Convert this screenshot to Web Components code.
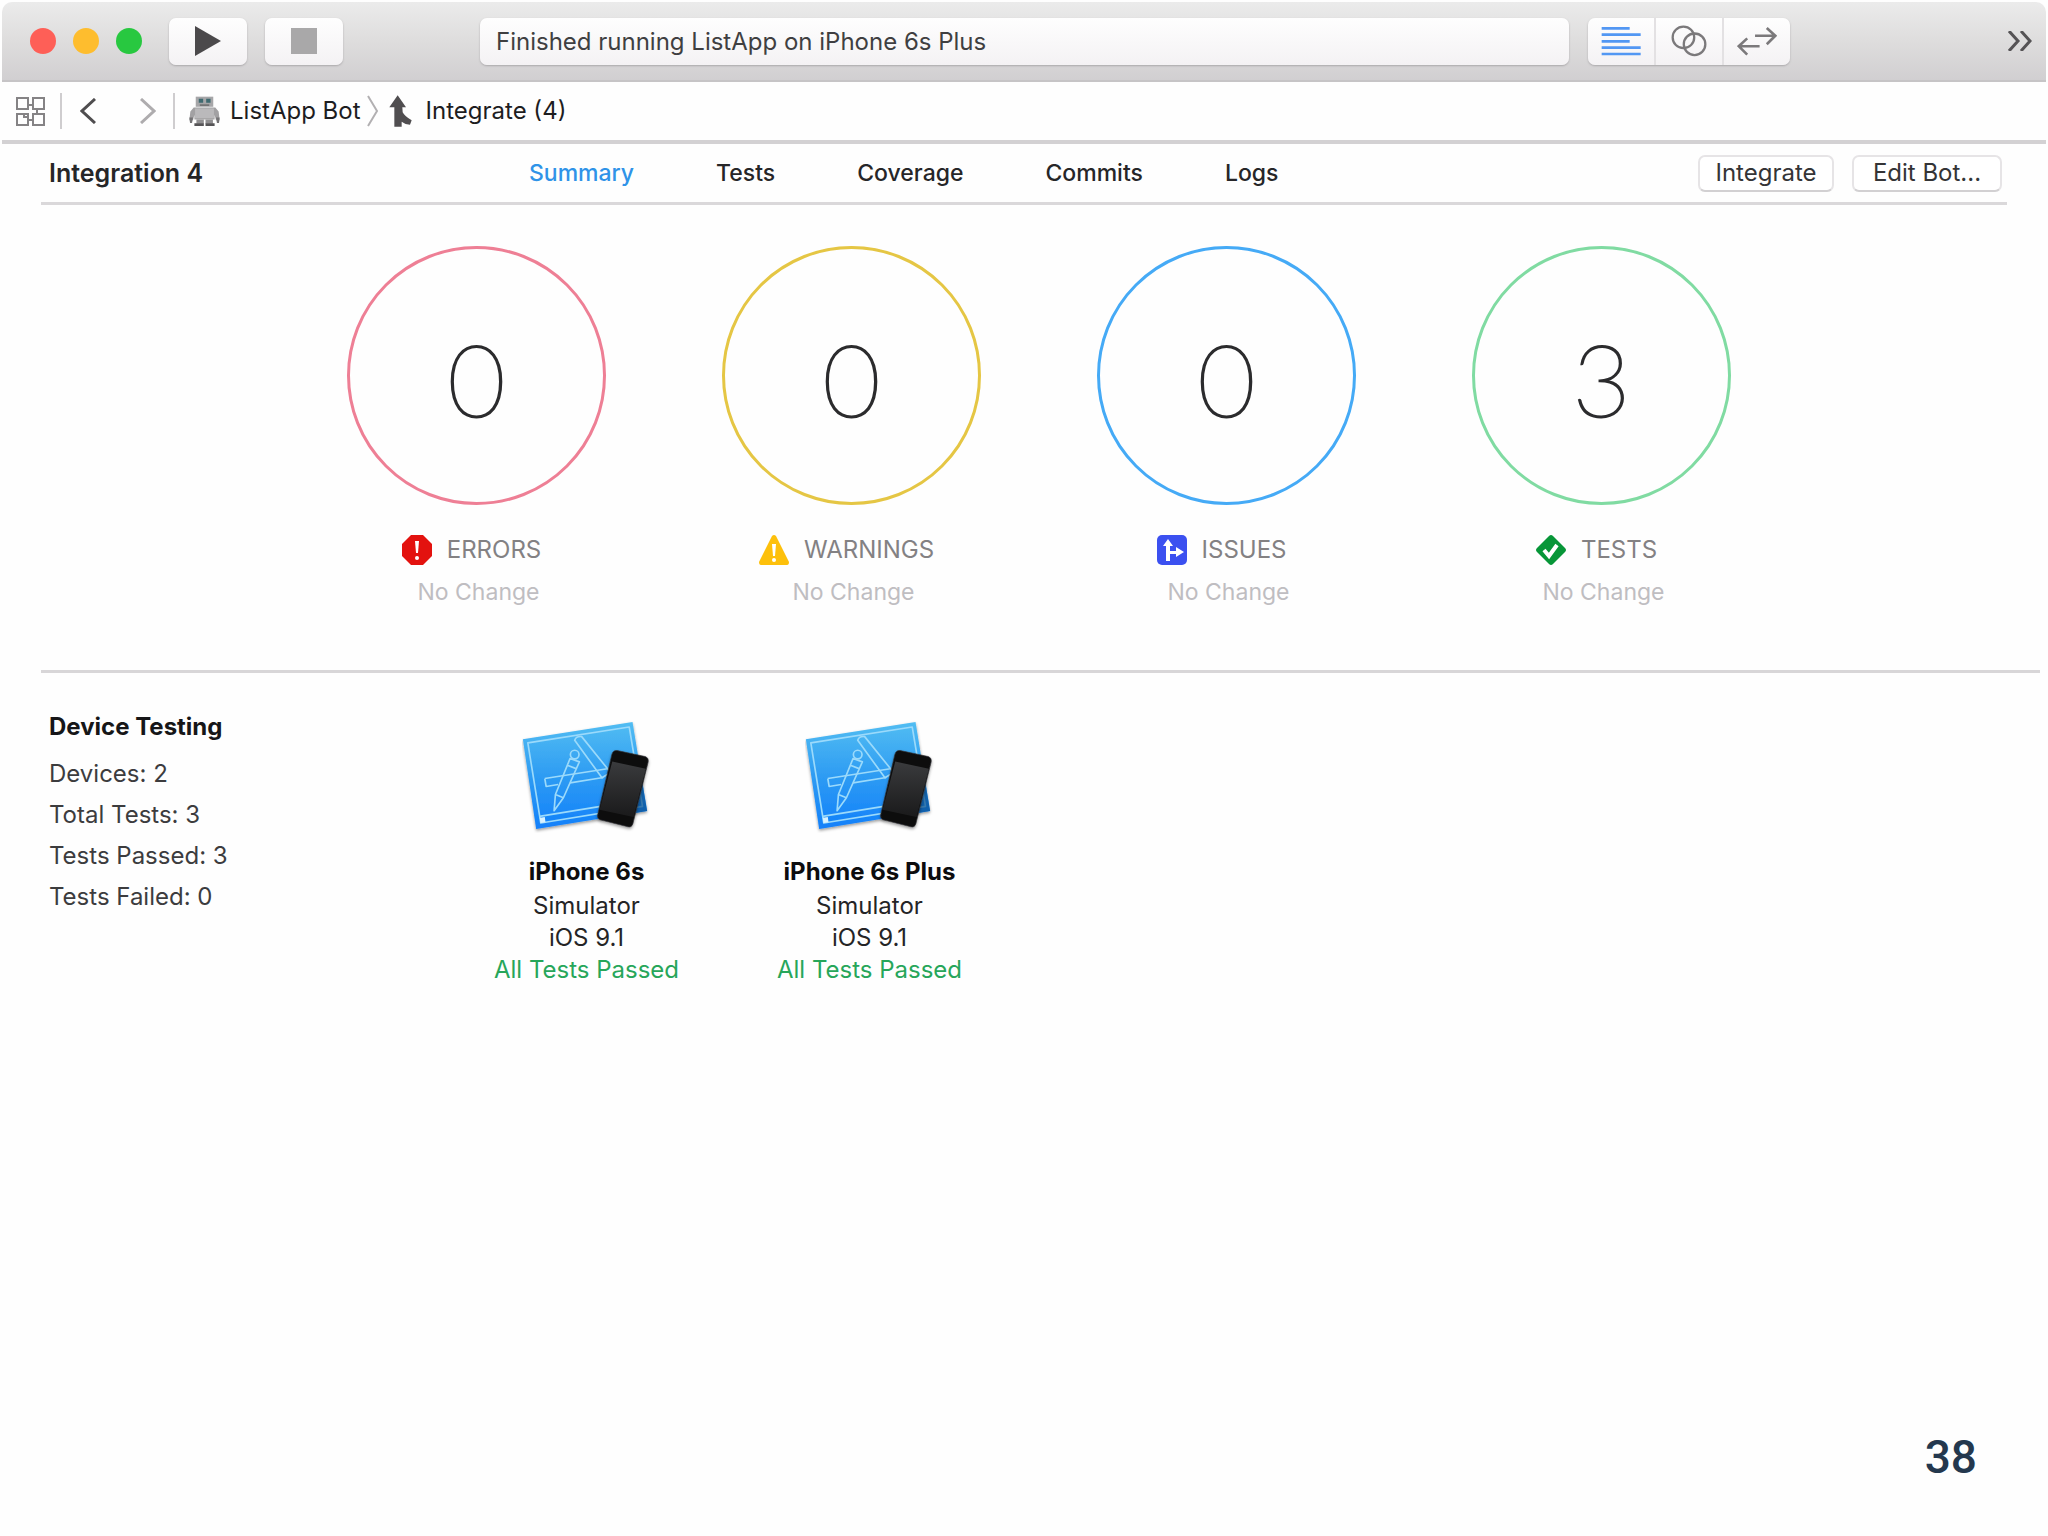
<!DOCTYPE html>
<html lang="en">
<head>
<meta charset="utf-8">
<title>ListApp Bot</title>
<style>
  body { margin: 0; background: #fefefe; font-family: Inter, "Liberation Sans", sans-serif; font-size: 24px; line-height: 32px; color: #262628; }
</style>
</head>
<body>
<bot-window>
  <window-toolbar slot="top" status="Finished running ListApp on iPhone 6s Plus"></window-toolbar>
  <jump-bar slot="top" bot="ListApp Bot" item="Integrate (4)"></jump-bar>
  <report-header slot="top" heading="Integration 4"></report-header>
  <stat-row>
    <stat-ring kind="errors" count="0" note="No Change">ERRORS</stat-ring>
    <stat-ring kind="warnings" count="0" note="No Change">WARNINGS</stat-ring>
    <stat-ring kind="issues" count="0" note="No Change">ISSUES</stat-ring>
    <stat-ring kind="tests" count="3" note="No Change">TESTS</stat-ring>
  </stat-row>
  <device-section>
    <span slot="heading">Device Testing</span>
    <span slot="facts">Devices: 2</span>
    <span slot="facts">Total Tests: 3</span>
    <span slot="facts">Tests Passed: 3</span>
    <span slot="facts">Tests Failed: 0</span>
    <device-card name="iPhone 6s" kind="Simulator" os="iOS 9.1">All Tests Passed</device-card>
    <device-card name="iPhone 6s Plus" kind="Simulator" os="iOS 9.1">All Tests Passed</device-card>
  </device-section>
  <span slot="page">38</span>
</bot-window>
<script>
const base = `:host,*{box-sizing:border-box}button{font:inherit;color:inherit;border:0;padding:0;background:none;display:flex;align-items:center;justify-content:center}a{color:inherit;text-decoration:none}svg{display:block;flex:none}`;

class Base extends HTMLElement {
  connectedCallback() {
    if (this.shadowRoot) return;
    this.attachShadow({ mode: 'open' }).innerHTML = `<style>${base}${this.css()}</style>${this.html()}`;
  }
  at(n) { return this.getAttribute(n) || ''; }
}

customElements.define('bot-window', class extends Base {
  css() { return `
    :host{display:flex;flex-direction:column;min-height:100vh;padding:2px 2px 0}
    footer{margin-top:auto;padding:0 69px 54px;text-align:right;font:500 46px/50px Roboto,"Liberation Sans",sans-serif;color:#24384e}`; }
  html() { return `<slot name="top"></slot><main><slot></slot></main><footer><slot name="page"></slot></footer>`; }
});

customElements.define('window-toolbar', class extends Base {
  css() { return `
    :host{display:flex;align-items:center;height:80px;padding:0 14px 0 28px;border-radius:10px 10px 0 0;border-bottom:2px solid #c6c4c6;background:linear-gradient(#ebebeb,#dedddd 50%,#d1cfd1)}
    .lights{display:flex;gap:17px;margin-right:27px}
    .lights button{width:26px;height:26px;border-radius:50%}
    .box{height:47px;border-radius:7px;background:linear-gradient(#fefefe,#f4f2f4);box-shadow:0 1px 2px #aaa8aa}
    .tool{width:78px;margin-right:18px}
    output{flex:1;margin:0 19px 0 119px;padding:0 16px;line-height:47px;color:#3f3f41;white-space:nowrap}
    .seg{display:flex;width:202px;margin-right:218px}
    .seg button{flex:1}
    .seg button+button{border-left:2px solid #e3e1e3}`; }
  html() { return `
    <div class="lights">
      <button aria-label="Close" style="background:#fe5f57"></button>
      <button aria-label="Minimize" style="background:#febd2e"></button>
      <button aria-label="Zoom" style="background:#28c840"></button>
    </div>
    <button class="box tool" aria-label="Run"><svg width="26" height="30" viewBox="0 0 26 30"><path d="M0 0L26 15L0 30Z" fill="#4b494b"/></svg></button>
    <button class="box tool" aria-label="Stop"><svg width="26" height="26"><rect width="26" height="26" fill="#a9a8a9"/></svg></button>
    <output class="box">${this.at('status')}</output>
    <div class="box seg">
      <button aria-label="Standard editor"><svg width="40" height="30" viewBox="66 50 120 90"><path d="M68 57H152M68 76H185M68 96H152M68 115H185M68 134H185" stroke="#5297f3" stroke-width="8"/></svg></button>
      <button aria-label="Assistant editor"><svg width="36" height="32" viewBox="276 44 108 98"><g fill="none" stroke="#7b797b" stroke-width="7"><circle cx="313" cy="82" r="33"/><circle cx="347" cy="103" r="33"/></g></svg></button>
      <button aria-label="Version editor"><svg width="40" height="30" viewBox="474 46 122 92"><path d="M529 76H590M565 52L591 76L565 102M543 108H480M505 84L479 108L505 134" fill="none" stroke="#7b797b" stroke-width="8"/></svg></button>
    </div>
    <button aria-label="More"><svg width="24" height="20" viewBox="0 0 24 20"><path d="M1 0L10 10L1 20M13 0L22 10L13 20" fill="none" stroke="#555355" stroke-width="3"/></svg></button>`; }
});

customElements.define('jump-bar', class extends Base {
  css() { return `
    :host{display:flex;align-items:center;height:62px;padding:0 14px;border-bottom:4px solid #d3d1d3;color:#1d1d1f}
    i{width:2px;height:36px;background:#cfcdcf}
    .grid{margin-right:15px}
    .back{margin:0 44px 0 18px}
    .next{margin-right:17px}
    a{display:flex;align-items:center;gap:10px;white-space:nowrap}
    .bot{margin-left:14px}
    .sep{margin:0 10px 0 6px}
    .item{gap:14px}`; }
  html() { return `
    <button class="grid" aria-label="Related items"><svg width="29" height="29" viewBox="0 0 29 29"><g fill="none" stroke="#858385" stroke-width="2"><rect x="1" y="1" width="11" height="11"/><rect x="17" y="1" width="11" height="11"/><rect x="1" y="17" width="11" height="11"/><rect x="17" y="17" width="11" height="11"/><path d="M12 8H17M21 12V17M12 23H17M8 17V20H12"/></g></svg></button>
    <i></i>
    <button class="back" aria-label="Back"><svg width="16" height="26" viewBox="0 0 16 26"><path d="M15 1L2 13L15 25" fill="none" stroke="#4f4d4f" stroke-width="3"/></svg></button>
    <button class="next" aria-label="Forward"><svg width="16" height="26" viewBox="0 0 16 26"><path d="M1 1L14 13L1 25" fill="none" stroke="#aeacae" stroke-width="3"/></svg></button>
    <i></i>
    <a class="bot" href="#bot"><svg width="31" height="31" viewBox="28 16 92 92">
      <path d="M48 18H100V48H48Z" fill="#a6a6a8"/><path d="M57 24H70V36H57ZM79 24H92V36H79Z" fill="#3f6a70"/><path d="M60 41H88V45H60Z" fill="#666"/>
      <path d="M42 50H106L116 62L119 88H108L104 72V86H44V72L40 88H29L32 62Z" fill="#a2a1a3"/><path d="M46 53H102V82H46Z" fill="#bab9bb"/>
      <path d="M29 80H40L37 96H31ZM108 80H119L117 96H111Z" fill="#747375"/>
      <path d="M50 86H72V98H50ZM77 86H99V98H77Z" fill="#919092"/><path d="M44 97H72V105H44ZM77 97H104V105H77Z" fill="#555456"/></svg><span>${this.at('bot')}</span></a>
    <svg class="sep" width="12" height="32" viewBox="0 0 12 32"><path d="M1 1L10 16L1 31" fill="none" stroke="#b2b0b2" stroke-width="2"/></svg>
    <a class="item" href="#integration"><svg width="23" height="32" viewBox="627 20 69 96"><path d="M653 21L678 57H667L668 72Q674 84 695 96L690 109Q676 109 665 100V115H643V57H628Z" fill="#504e50"/></svg><span>${this.at('item')}</span></a>`; }
});

customElements.define('report-header', class extends Base {
  css() { return `
    :host{display:flex;align-items:center;height:61px;margin:0 39px;padding:0 5px 0 8px;border-bottom:3px solid #dad8da;white-space:nowrap}
    h1{flex:none;width:480px;margin:0;font-size:25px;line-height:32px;font-weight:600}
    nav{display:flex;flex:1;gap:82px;font-size:23px;font-weight:500}
    nav a[aria-current]{color:#2f93e8}
    .actions{display:flex;gap:18px;color:#343436}
    .actions button{width:136px;height:37px;border:2px solid #e6e4e6;border-bottom-color:#d2d0d2;border-radius:7px;background:#fff}
    .actions button+button{width:150px}`; }
  html() { return `<h1>${this.at('heading')}</h1>
    <nav><a href="#summary" aria-current="page">Summary</a><a href="#tests">Tests</a><a href="#coverage">Coverage</a><a href="#commits">Commits</a><a href="#logs">Logs</a></nav>
    <div class="actions"><button>Integrate</button><button>Edit Bot...</button></div>`; }
});

customElements.define('stat-row', class extends Base {
  css() { return `:host{display:grid;grid-template-columns:repeat(4,1fr);margin:0 6px 0 39px;padding:41px 251px 62px 248px;border-bottom:3px solid #d8d6d8}`; }
  html() { return `<slot></slot>`; }
});

const badges = {
  errors: ['#ee7f95', `<path d="M9 0H21L30 9V21L21 30H9L0 21V9Z" fill="#e3120f"/><path d="M13 6H17L16 18H14Z" fill="#fff"/><circle cx="15" cy="23" r="2" fill="#fff"/>`],
  warnings: ['#e5c644', `<path d="M13 1Q15 -1 17 1L30 27Q30 30 28 30H2Q0 30 0 27Z" fill="#fdc00b"/><path d="M13 9H17L16 21H14Z" fill="#fff"/><circle cx="15" cy="25" r="2" fill="#fff"/>`],
  issues: ['#45aaf6', `<rect width="30" height="30" rx="5" fill="#3b50f0"/><path d="M9 26V11H6L11 4L16 11H13V16H19V12L27 17L19 22V19H13V26Z" fill="#fff"/>`],
  tests: ['#80dba2', `<path d="M13 1Q15 -1 17 1L29 13Q31 15 29 17L17 29Q15 31 13 29L1 17Q-1 15 1 13Z" fill="#079638"/><path d="M8 15L13 21L21 10" fill="none" stroke="#fff" stroke-width="4"/>`]
};
customElements.define('stat-ring', class extends Base {
  css() { return `
    :host{display:flex;flex-direction:column;align-items:center}
    .ring{display:flex;align-items:center;justify-content:center;width:259px;height:259px;padding-top:4px;border:3px solid ${badges[this.at('kind')][0]};border-radius:50%;font-family:Lato,sans-serif;font-size:100px;line-height:120px;font-weight:100;color:#2b2b2d;-webkit-text-stroke:2px #2b2b2d}
    .label{display:flex;align-items:center;gap:15px;margin-top:29px;padding-right:10px;color:#838183}
    .note{margin-top:10px;padding-left:4px;font-size:23px;color:#bfbdc1}`; }
  html() { return `<div class="ring">${this.at('count')}</div>
    <div class="label"><svg width="30" height="30" viewBox="0 0 30 30">${badges[this.at('kind')][1]}</svg><span><slot></slot></span></div>
    <div class="note">${this.at('note')}</div>`; }
});

customElements.define('device-section', class extends Base {
  css() { return `
    :host{display:flex;padding:38px 47px 40px}
    .facts{flex:none;width:396px;line-height:41px;color:#3c3c3e}
    h2{margin:0 0 10px;font-size:24px;line-height:32px;font-weight:700;color:#161618}
    ::slotted([slot=facts]){display:block}
    .cards{display:flex;padding-top:9px}`; }
  html() { return `<div class="facts"><h2><slot name="heading"></slot></h2><slot name="facts"></slot></div><div class="cards"><slot></slot></div>`; }
});

customElements.define('device-card', class extends Base {
  css() { return `
    :host{display:flex;flex-direction:column;align-items:center;width:283px;color:#242426}
    h3{margin:23px 0 2px;font-size:24px;line-height:32px;font-weight:700;color:#0c0c0e}
    .pass{color:#27a65a}`; }
  html() { return `
    <svg width="130" height="113" viewBox="64 60 390 340" aria-hidden="true">
      <defs>
        <linearGradient id="sky" x1="0" y1="0" x2="0" y2="1"><stop offset="0" stop-color="#52bdf2"/><stop offset=".5" stop-color="#2e9cf3"/><stop offset="1" stop-color="#1280fa"/></linearGradient>
        <linearGradient id="glass" x1="0" y1="0" x2="0" y2="1"><stop offset="0" stop-color="#3a3b3d"/><stop offset="1" stop-color="#1a1a1b"/></linearGradient>
        <filter id="soft" x="-20%" y="-20%" width="140%" height="140%"><feDropShadow dx="0" dy="5" stdDeviation="5" flood-opacity=".4"/></filter>
      </defs>
      <path d="M66 118L396 66L440 334L106 388Z" fill="url(#sky)" filter="url(#soft)"/>
      <g fill="none" stroke="#9bdafb" stroke-width="5" stroke-linejoin="round">
        <path d="M81 129L386 81L426 320L120 370Z"/><path d="M116 350L300 320"/>
        <path d="M222 121Q226 108 243 110L330 218L304 234Z"/>
        <path d="M132 236L325 206M132 236L136 260L172 254M208 249L308 233"/>
        <circle cx="222" cy="164" r="13"/><path d="M208 176L236 186L188 294L160 333L164 284ZM164 284L188 294M200 196L228 207"/>
      </g>
      <path d="M117 354L132 352L134 368L119 370Z" fill="#d9f2ff"/>
      <path d="M422 230L440 334L405 340Z" fill="#0b4f8c" opacity=".7"/>
      <path d="M350 152L434 170Q445 174 443 186L397 372Q393 384 382 381L298 360Q289 356 291 346L334 163Q338 150 350 152Z" fill="#0d0d0e" stroke="#333436" stroke-width="2" filter="url(#soft)"/>
      <path d="M335 185L436 207L399 352L297 330Z" fill="url(#glass)"/>
    </svg>
    <h3>${this.at('name')}</h3><div>${this.at('kind')}</div><div>${this.at('os')}</div><div class="pass"><slot></slot></div>`; }
});
</script>
</body>
</html>
